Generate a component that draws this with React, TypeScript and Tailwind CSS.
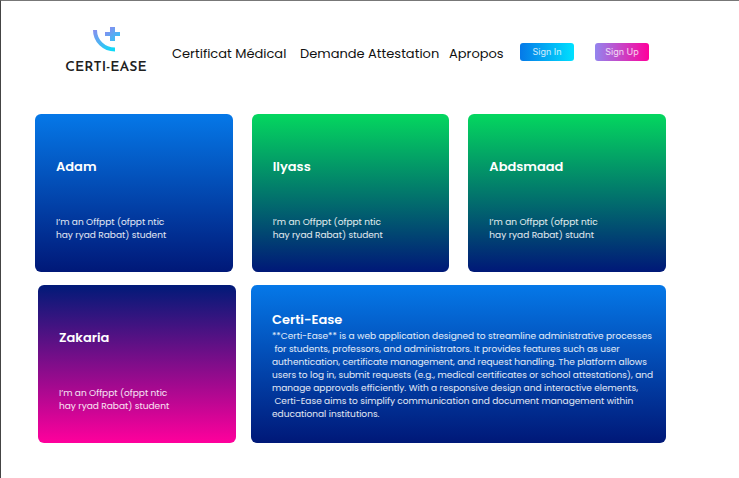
const FONT = "font-[Poppins,Inter,sans-serif]";

type Person = { name: string; lines: [string, string]; gradient: string };

const blue = "from-[#0578e8] to-[#001878]";
const green = "from-[#04d75f] to-[#001878]";
const pink = "from-[#001a78] to-[#ff009c]";

const people: Person[] = [
  { name: "Adam", lines: ["I’m an Offppt (ofppt ntic", "hay ryad Rabat) student"], gradient: blue },
  { name: "Ilyass", lines: ["I’m an Offppt (ofppt ntic", "hay ryad Rabat) student"], gradient: green },
  { name: "Abdsmaad", lines: ["I’m an Offppt (ofppt ntic", "hay ryad Rabat) studnt"], gradient: green },
];

const zakaria: Person = {
  name: "Zakaria",
  lines: ["I’m an Offppt (ofppt ntic", "hay ryad Rabat) student"],
  gradient: pink,
};

const about = [
  "**Certi-Ease** is a web application designed to streamline administrative processes",
  " for students, professors, and administrators. It provides features such as user",
  "authentication, certificate management, and request handling. The platform allows",
  "users to log in, submit requests (e.g., medical certificates or school attestations), and",
  "manage approvals efficiently. With a responsive design and interactive elements,",
  " Certi-Ease aims to simplify communication and document management within",
  "educational institutions.",
].join("\n");

function Logo() {
  return (
    <a href="#" className="flex w-20 flex-col items-center">
      <svg width="28" height="26" viewBox="0 0 28 26" aria-hidden="true">
        <defs>
          <linearGradient id="arc" x1="0" y1="0" x2="22" y2="24" gradientUnits="userSpaceOnUse">
            <stop offset="0" stopColor="#9a83ed" />
            <stop offset="1" stopColor="#0bdcf8" />
          </linearGradient>
          <linearGradient id="plus" x1="14" y1="1" x2="26" y2="14" gradientUnits="userSpaceOnUse">
            <stop offset="0" stopColor="#9585ee" />
            <stop offset="1" stopColor="#2fc4f6" />
          </linearGradient>
        </defs>
        <path d="M3 4 C3 15 12 23.5 23 23.5" fill="none" stroke="url(#arc)" strokeWidth="4" />
        <path d="M18 1h5v5h5v4h-5v5h-5v-5h-5V6h5z" fill="url(#plus)" />
      </svg>
      <span className="mt-[7px] font-['Josefin_Sans',Lato,sans-serif] text-[14px] leading-[18px] font-semibold whitespace-nowrap text-[#202020]">
        CERTI-EASE
      </span>
    </a>
  );
}

function PersonCard({ person }: { person: Person }) {
  return (
    <article className={`min-h-[158px] rounded-md bg-linear-to-b/srgb px-[21px] pt-[43px] text-white ${person.gradient}`}>
      <h2 className="text-[13px] leading-5 font-semibold">{person.name}</h2>
      <p className="mt-[39px] text-[9px] leading-[13px] text-white/90">
        {person.lines[0]}
        <br />
        {person.lines[1]}
      </p>
    </article>
  );
}

export default function App() {
  return (
    <div className={`min-h-screen border-t border-l border-t-[#777777] border-l-[#444444] bg-white ${FONT}`}>
      <header className="flex items-start pt-[25px] pr-[90px] pl-[65px]">
        <Logo />
        <nav className="mt-[17px] ml-[26px] flex flex-1 items-center text-[13px] leading-[22px] whitespace-nowrap text-[#111111]">
          <a href="#certificat" className="w-32">Certificat Médical</a>
          <a href="#attestation" className="w-[149px]">Demande Attestation</a>
          <a href="#apropos">Apropos</a>
        </nav>
        <div className="mt-[17px] flex gap-[21px] font-[Inter,sans-serif] text-[9px] text-white/80">
          <button className="h-[18px] w-[54px] rounded-[3px] bg-linear-to-r/srgb from-[#0579e8] to-[#00e1ff]">Sign In</button>
          <button className="h-[18px] w-[54px] rounded-[3px] bg-linear-to-r/srgb from-[#9385ee] to-[#ff009c]">Sign Up</button>
        </div>
      </header>

      <main className="mt-[37px] pr-[73px] pb-8 pl-[34px]">
        <section className="grid grid-cols-3 gap-[19px]">
          {people.map((person) => (
            <PersonCard key={person.name} person={person} />
          ))}
        </section>
        <section className="mt-[13px] grid grid-cols-[minmax(0,198fr)_minmax(0,415fr)] gap-[15px] pl-[3px]">
          <PersonCard person={zakaria} />
          <article className={`rounded-md bg-linear-to-b/srgb px-[21px] pt-[25px] text-white ${blue}`}>
            <h2 className="text-[13px] leading-5 font-semibold">Certi-Ease</h2>
            <p className="text-[9px] leading-[13px] whitespace-pre text-white/90">{about}</p>
          </article>
        </section>
      </main>
    </div>
  );
}
